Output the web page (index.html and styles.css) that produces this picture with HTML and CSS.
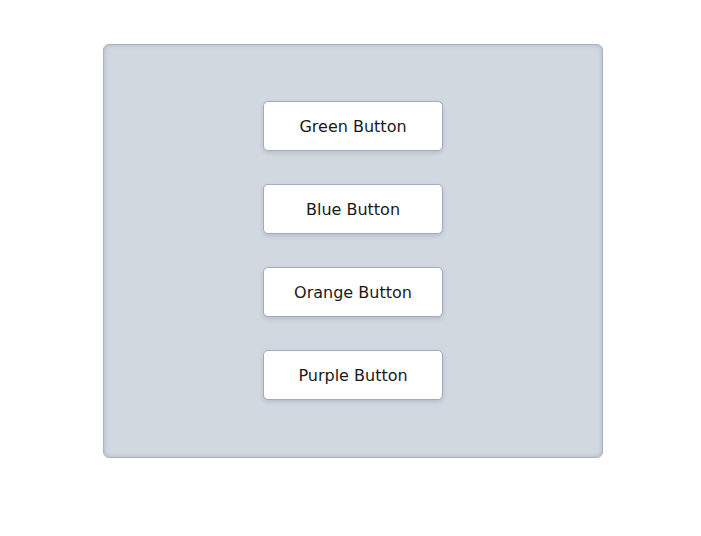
FILE: index.html
```html
<!DOCTYPE html>
<html>
<head>
<meta charset="utf-8">
<link rel="stylesheet" href="styles.css">
</head>
<body>
<div class="panel">
  <button class="btn">Green Button</button>
  <button class="btn">Blue Button</button>
  <button class="btn">Orange Button</button>
  <button class="btn">Purple Button</button>
</div>
</body>
</html>
```
FILE: styles.css
```css
html, body {
  margin: 0;
  padding: 0;
  background: #ffffff;
}
body {
  padding-top: 44px;
  font-family: "DejaVu Sans", sans-serif;
}
.panel {
  box-sizing: border-box;
  width: 500px;
  height: 414px;
  margin-left: 103px;
  background: #d1d8e0;
  border: 1px solid #a9b2c6;
  border-radius: 6px;
  box-shadow: inset 0 0 4px rgba(60, 70, 100, 0.25);
  display: flex;
  flex-direction: column;
  align-items: center;
  padding-top: 56px;
  gap: 33px;
}
.btn {
  box-sizing: border-box;
  width: 180px;
  height: 50px;
  background: #ffffff;
  border: 1px solid #a3abc0;
  border-radius: 5px;
  box-shadow: 0 2px 4px rgba(60, 70, 100, 0.18);
  font-family: "DejaVu Sans", sans-serif;
  font-size: 16px;
  color: #1a1a1a;
  padding: 0;
  cursor: pointer;
}
```
